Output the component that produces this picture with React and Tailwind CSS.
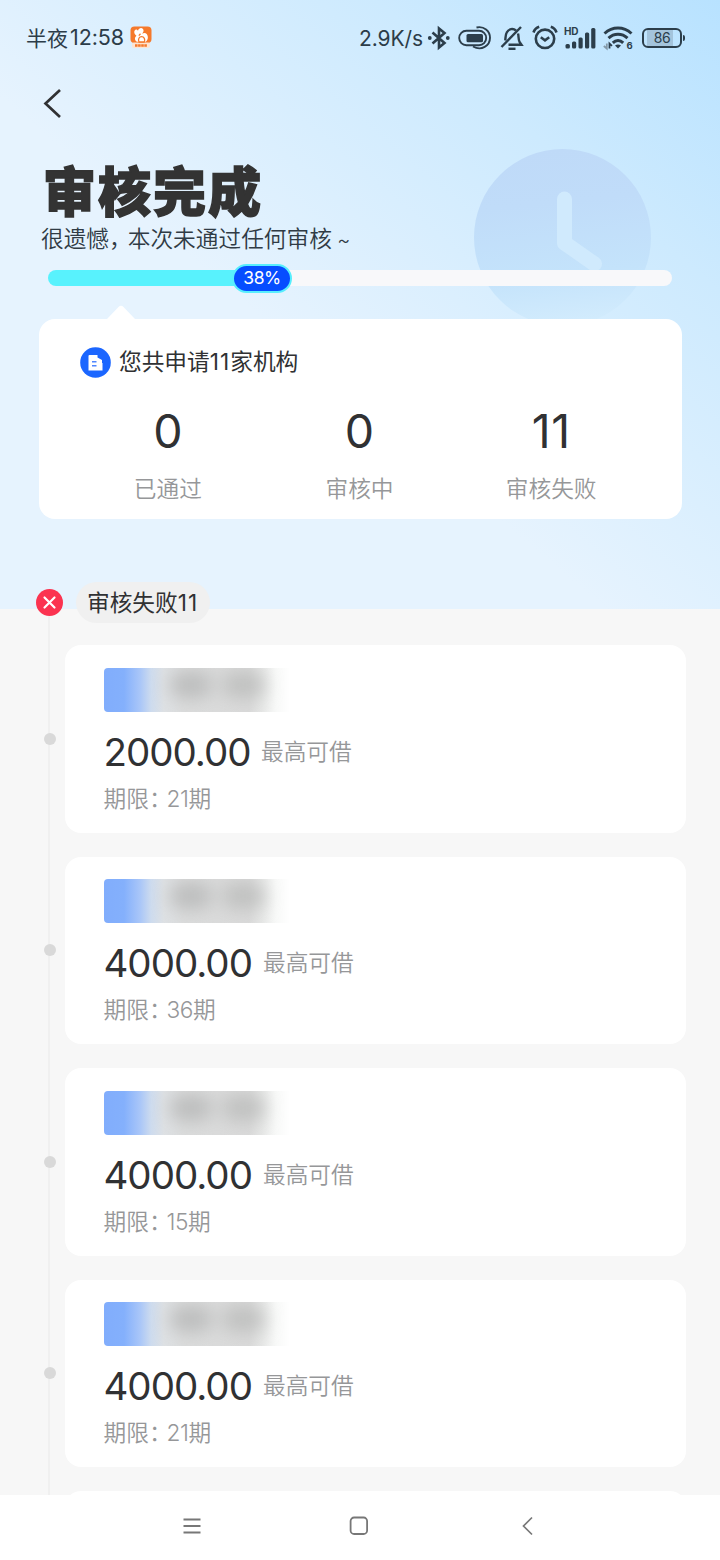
import React from "react";

const loans = [
  { amount: "2000.00", term: "21", gap: "ml-[8.500px]" },
  { amount: "4000.00", term: "36", gap: "ml-[10.500px]" },
  { amount: "4000.00", term: "15", gap: "ml-[10.500px]" },
  { amount: "4000.00", term: "21", gap: "ml-[10.500px]" },
];

const stats = [
  { value: "0", label: "已通过", ls: "tracking-normal" },
  { value: "0", label: "审核中", ls: "tracking-normal" },
  { value: "11", label: "审核失败", ls: "tracking-[0.5px]" },
];

function AppBadge() {
  return (
    <svg width="22" height="22" viewBox="0 0 22 22">
      <rect x="0.5" y="0.5" width="21" height="16.5" rx="4" fill="#f5792b" />
      <rect x="2" y="16.500" width="18" height="5.5" rx="2" fill="#fde3d0" />
      <path d="M5 19.500h12" stroke="#f5792b" strokeWidth="2.4" strokeDasharray="2.600 .5" />
      <path
        d="M7 15.800C4.500 14.500 4.300 11.500 6.500 9.800 4 8 3.500 5 5.500 3.800c1-.6 1.900.2 2.500 1C8.600 2.600 11 1.200 12.800 2.800c1.500 1.500.7 3.600-.8 5 1.300-.9 3.500-1.300 4.700.2 1.900 2.300 1.500 6.500-1.200 7.800z"
        fill="#fff"
      />
      <path d="M9 16c-1.300-2.800.2-5.300 2.600-5.300s4 2.600 2.600 5.300zM10.500 7.800 8.800 9.600" stroke="#f5792b" strokeWidth="1.300" fill="#fff" />
    </svg>
  );
}

function Bluetooth() {
  return (
    <svg width="24" height="26" viewBox="0 0 24 26" fill="none" stroke="#2c3e4b" strokeWidth="2.600">
      <path d="M5.500 7.500 17.500 18 12 22.500V3.500l5.500 4.500L5.500 18.500" strokeLinejoin="miter" />
      <circle cx="2.800" cy="13" r="1.900" fill="#2c3e4b" stroke="none" />
      <circle cx="20.800" cy="13" r="1.900" fill="#2c3e4b" stroke="none" />
    </svg>
  );
}

function Capsule() {
  return (
    <svg width="34" height="26" viewBox="0 0 34 26" fill="none" stroke="#2c3e4b" strokeWidth="1.900">
      <rect x="1.200" y="5.800" width="27" height="14.400" rx="7.200" />
      <rect x="8.500" y="9" width="16.500" height="8.300" rx="1.500" fill="#2c3e4b" stroke="none" />
      <path d="M18.500 2.500c7.500-1.700 13.500 3.500 13.500 10.300 0 8-8.500 13.500-17 8.700" />
    </svg>
  );
}

function BellOff() {
  return (
    <svg width="24" height="26" viewBox="0 0 24 26" fill="none" stroke="#2c3e4b" strokeWidth="2.400">
      <path d="M5.200 15.500C5.700 13 5.200 10 6.700 7.500c2-3.800 6.300-4.500 9.300-2M18 8.500c.8 2.500.3 6.500 1.500 8.300l2 2.900H8.500" />
      <path d="M1.500 22 21 2" />
      <path d="M8.500 23.800h7" />
    </svg>
  );
}

function Alarm() {
  return (
    <svg width="26" height="26" viewBox="0 0 26 26" fill="none" stroke="#2c3e4b" strokeWidth="2.600">
      <circle cx="13" cy="13.800" r="9.200" />
      <path d="m8.800 12.300 4.200 3 4.200-3" />
      <path d="M1.500 7.500C2.400 4.600 4.300 2.700 7.200 1.800M24.500 7.500c-.9-2.900-2.800-4.800-5.700-5.700" />
    </svg>
  );
}

function Signal() {
  return (
    <svg width="32" height="24" viewBox="0 0 32 24" fill="#2c3e4b">
      <text x="0" y="8.800" fontSize="10" fontWeight="700" fontFamily="Inter, sans-serif" textLength="14.500">HD</text>
      <rect x="1.500" y="18" width="4.400" height="4.500" rx="1.500" />
      <rect x="8" y="15.500" width="4.200" height="7" rx="1.500" />
      <rect x="14.500" y="11.500" width="4.200" height="11" rx="1.500" />
      <rect x="21" y="6.500" width="4.200" height="16" rx="1.500" />
      <rect x="27.200" y="2" width="4.200" height="20.500" rx="1.500" />
    </svg>
  );
}

function Wifi() {
  return (
    <svg width="30" height="26" viewBox="0 0 30 26" fill="none" stroke="#2c3e4b" strokeWidth="3">
      <path d="M1.500 8.500c8-7.300 19-7.300 27 0M5.500 13.200c5.500-5.200 13.500-5.200 19 0M9.800 17.800c3.200-3 7.200-3 10.400 0" />
      <path d="m15 23.500-3-3q3-2 6 0z" fill="#2c3e4b" stroke="none" />
      <path d="M3.800 18.500v5l-3-2.500" stroke="#8499a8" strokeWidth="1.800" />
      <path d="M6.500 23.500v-5L9 20.800" strokeWidth="1.800" />
      <text x="23.500" y="24" fontSize="9.500" fontWeight="700" fontFamily="Inter, sans-serif" fill="#2c3e4b" stroke="none">6</text>
    </svg>
  );
}

function Battery() {
  return (
    <div className="flex items-center">
      <div className="flex h-[20px] w-[40px] items-center justify-center rounded-[6px] border-[2.500px] border-[#2c3e4b] bg-[linear-gradient(90deg,transparent_3px,#a4c4dc_3px,#a4c4dc_29px,transparent_29px)]">
        <span className="text-[14px] leading-[14px] tracking-[-0.5px] text-[#2c3e4b]">86</span>
      </div>
      <div className="ml-px h-[6px] w-[2px] rounded-r bg-[#2c3e4b]" />
    </div>
  );
}

function StatusBar() {
  return (
    <div className="flex h-[76px] shrink-0 items-center pl-[26px] text-[#2c3c48]">
      <div className="flex w-[104px] items-center text-[21px] leading-none whitespace-nowrap">
        半夜<span className="ml-[2px] text-[21.500px] tracking-[-0.1px]">12:58</span>
      </div>
      <div className="-mt-[2px]"><AppBadge /></div>
      <div className="ml-[207px] w-[68px] text-[21px] leading-none tracking-[-0.1px] whitespace-nowrap">2.9K/s</div>
      <div><Bluetooth /></div>
      <div className="ml-[7px]"><Capsule /></div>
      <div className="ml-[8px]"><BellOff /></div>
      <div className="ml-[8px]"><Alarm /></div>
      <div className="ml-[6px]"><Signal /></div>
      <div className="ml-[7px]"><Wifi /></div>
      <div className="ml-[9px]"><Battery /></div>
    </div>
  );
}

function ClockArt() {
  return (
    <svg className="absolute top-[149px] left-[474px]" width="177" height="177" viewBox="0 0 177 177">
      <defs>
        <linearGradient id="face" x1="0.45" y1="0" x2="0.55" y2="1">
          <stop offset="0" stopColor="#bfdaf8" />
          <stop offset="0.3" stopColor="#c0dcf9" />
          <stop offset="0.7" stopColor="#c4e3fb" />
          <stop offset="1" stopColor="#d3ecfd" />
        </linearGradient>
      </defs>
      <circle cx="88.500" cy="88.500" r="88.500" fill="url(#face)" />
      <path d="M90.500 50v44l30 21" fill="none" stroke="#d0eafd" strokeWidth="15" strokeLinecap="round" strokeLinejoin="round" />
    </svg>
  );
}

function Progress() {
  return (
    <div className="mt-[8px] ml-[48px] flex h-[30px] w-[624px] shrink-0 items-center">
      <div className="-mr-[16px] h-[16px] w-[200px] rounded-l-full bg-[#58f2fd]" />
      <div className="z-10 -mr-[10px] flex h-[29px] w-[60px] shrink-0 items-center justify-center rounded-full border-2 border-[#58eefd] bg-[#064dff] text-[17.500px] leading-none tracking-[-0.5px] text-white">
        38%
      </div>
      <div className="h-[16px] flex-1 rounded-r-full bg-[#f8f8fa]" />
    </div>
  );
}

function Summary() {
  return (
    <div className="mt-[12px] ml-[39px] w-[643px] shrink-0">
      <svg className="ml-[68px] block" width="28" height="14" viewBox="0 0 28 14">
        <path d="M0 14 11.500 2q2.500-2.500 5 0L28 14z" fill="#fff" />
      </svg>
      <div className="h-[200px] rounded-[16px] bg-white pt-[27px]">
        <div className="flex h-[32px] items-center pl-[41px]">
          <svg width="31" height="31" viewBox="0 0 31 31">
            <circle cx="15.500" cy="15.500" r="15.300" fill="#1b66ff" />
            <path d="M9.500 8h8v2.500l4.500 2.500v3h.5v7.500h-14V9q0-1 1-1z" fill="#fff" />
            <path d="M12 14.800h4.500M12 18.800h4.500" stroke="#4f86ff" strokeWidth="1.500" />
          </svg>
          <span className="ml-[8px] text-[22.700px] leading-[32px] text-[#303133]">
            您共申请<span className="tracking-[1px]">11</span>家机构
          </span>
        </div>
        <div className="mt-[25px] grid grid-cols-3 pr-[35px] pl-[33px]">
          {stats.map((s) => (
            <div key={s.label} className="flex flex-col items-center">
              <div className={"h-[56px] text-[46.500px] leading-[56px] text-[#303133] " + s.ls}>{s.value}</div>
              <div className="mt-[14px] text-[22.700px] leading-[32px] font-[350] text-[#969799]">{s.label}</div>
            </div>
          ))}
        </div>
      </div>
    </div>
  );
}

function LoanCard({ loan }) {
  return (
    <div className="flex h-[187.500px] shrink-0 items-center">
      <div className="ml-[44px] size-[12px] rounded-full bg-[#d9d9d9]" />
      <div className="ml-[9px] h-full w-[621px] rounded-[16px] bg-white pt-[22.500px] pl-[38.500px]">
        <div className="h-[44px] w-[186px] overflow-hidden rounded-l-[4px] bg-[linear-gradient(90deg,#81adfc_0px,#84b0fc_20px,#a9c6f8_36px,#cddbee_47px,#dee1e4_60px,#dbdcdc_80px,#dadada_145px,#e6e7e6_158px,#f8f9f8_172px,#fff_186px)]">
          <div className="mt-[4px] ml-[66px] flex h-[26px] gap-[10px] blur-[9px]">
            <div className="w-[42px] rounded-full bg-[#bcbdbd]" />
            <div className="w-[42px] rounded-full bg-[#c0c1c0]" />
          </div>
        </div>
        <div className="mt-[15px] flex h-[50px] items-center whitespace-nowrap">
          <span className="w-[149px] text-[38.500px] leading-[50px] tracking-[-1px] text-[#303133]">{loan.amount}</span>
          <span className={"text-[22.700px] leading-[32px] font-[350] text-[#969799] " + loan.gap}>最高可借</span>
        </div>
        <div className="mt-[6px] flex h-[32px] text-[22.700px] leading-[32px] font-[350] whitespace-nowrap text-[#969799]">
          <span className="w-[63px]">期限<span className="tracking-[-8px]">：</span></span>
          <span className="tracking-[-0.400px]">{loan.term}期</span>
        </div>
      </div>
    </div>
  );
}

function NavBar() {
  return (
    <div className="flex h-[65px] w-full shrink-0 items-center bg-white pb-[3px] pl-[182px]">
      <svg width="20" height="20" viewBox="0 0 20 20" stroke="#777" strokeWidth="1.800">
        <path d="M1.500 3.500h17M1.500 10h17M1.500 16.500h17" />
      </svg>
      <svg className="ml-[147px]" width="20" height="20" viewBox="0 0 20 20" fill="none" stroke="#777" strokeWidth="1.800">
        <rect x="1.600" y="1.500" width="16.500" height="16.500" rx="3.500" />
      </svg>
      <svg className="ml-[150px]" width="20" height="20" viewBox="0 0 20 20" fill="none" stroke="#777" strokeWidth="1.700">
        <path d="M13 1.500 4.500 10 13 18.500" />
      </svg>
    </div>
  );
}

export default function App() {
  return (
    <div className="relative flex h-[1560px] w-[720px] flex-col overflow-hidden bg-[#f7f7f7] bg-[linear-gradient(to_bottom_left,#b8e2ff_0%,#cdeafe_24%,#e6f3fe_58%)] bg-[length:720px_609px] bg-no-repeat font-['Inter','Noto_Sans_CJK_SC',sans-serif]">
      <ClockArt />
      <div className="relative flex min-h-0 flex-1 flex-col overflow-hidden">
        <StatusBar />
        <svg className="mt-[12px] ml-[42px] block shrink-0" width="20" height="30" viewBox="0 0 20 30" fill="none" stroke="#303133" strokeWidth="2.700">
          <path d="M18 2 3.500 15.500 18 29" />
        </svg>
        <h1 className="mt-[41px] ml-[43px] h-[60px] shrink-0 text-[53px] leading-[60px] font-black tracking-[2px] whitespace-nowrap text-[#333] font-['Noto_Sans_CJK_SC',sans-serif] [-webkit-text-stroke:1.500px_#333]">审核完成</h1>
        <p className="mt-[4px] ml-[41px] h-[32px] shrink-0 text-[22.700px] leading-[32px] font-[350] whitespace-nowrap text-[#303b45]">
          很遗憾<span className="tracking-[-4px]">，</span>本次未通过任何审核 <span className="-ml-px text-[20px]">~</span>
        </p>
        <Progress />
        <Summary />
        <div className="mt-[63px] flex h-[41px] shrink-0 items-center pl-[36px]">
          <svg width="27" height="27" viewBox="0 0 27 27">
            <circle cx="13.500" cy="13.500" r="13.500" fill="#fb3350" />
            <path d="m8.500 8.500 10 10m0-10-10 10" stroke="#fff" strokeWidth="2.200" strokeLinecap="round" />
          </svg>
          <div className="ml-[13px] flex h-[41px] w-[134px] items-center rounded-full bg-[#f0f0f0] pl-[11px] text-[22.700px] leading-[32px] whitespace-nowrap text-[#303133]">
            审核失败<span className="tracking-[1px]">11</span>
          </div>
        </div>
        <div className="mt-[-7px] flex min-h-0 flex-1 flex-col gap-[24px] overflow-hidden bg-[linear-gradient(#f0f0f0,#f0f0f0)] bg-[length:2px_100%] bg-[position:48px_0] bg-no-repeat pt-[29px]">
          {loans.map((loan, i) => (
            <LoanCard key={i} loan={loan} />
          ))}
          <div className="ml-[65px] h-[187px] w-[621px] shrink-0 rounded-[16px] bg-white" />
        </div>
      </div>
      <NavBar />
    </div>
  );
}
